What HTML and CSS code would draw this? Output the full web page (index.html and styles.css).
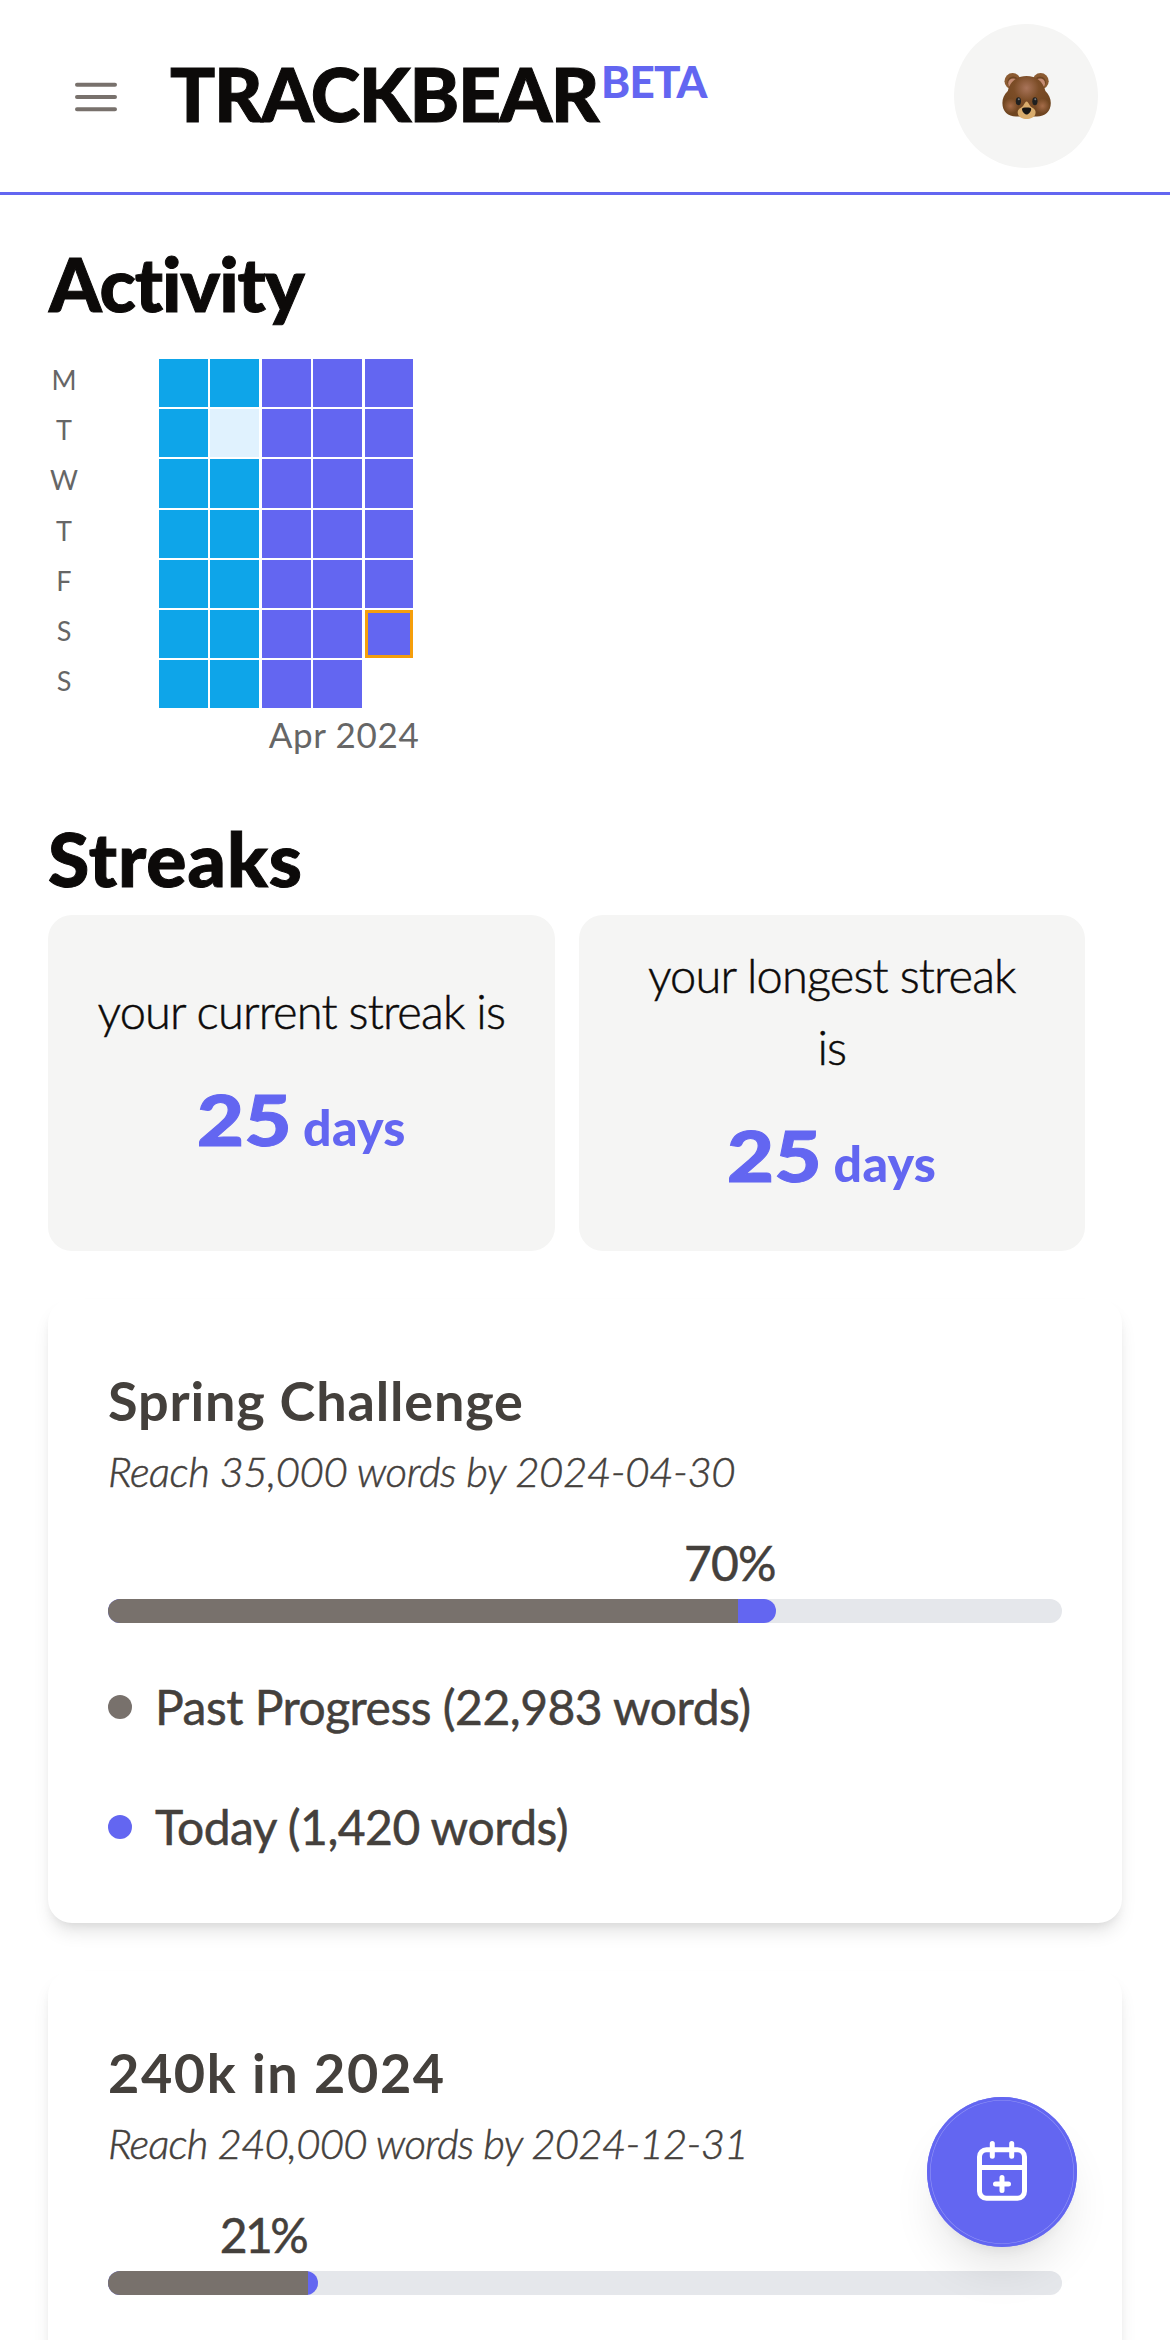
FILE: index.html
```html
<!DOCTYPE html>
<html lang="en">
<head>
<meta charset="utf-8">
<title>TrackBear</title>
<link rel="stylesheet" href="styles.css">
</head>
<body>
<header class="topbar">
  <button class="menu-button" aria-label="Menu">
    <svg width="42" height="30" viewBox="0 0 42 30" fill="none" stroke="#78716c" stroke-width="4" stroke-linecap="round"><path d="M2 2.8H40M2 15H40M2 27.2H40"/></svg>
  </button>
  <div class="brand"><span class="brand-name">TRACKBEAR</span><span class="brand-beta">BETA</span></div>
  <div class="avatar">
    <svg width="74" height="74" viewBox="0 0 74 74">
      <defs>
        <radialGradient id="fur" gradientUnits="userSpaceOnUse" cx="36.5" cy="28" r="28">
          <stop offset="0" stop-color="#a9745a"/><stop offset=".45" stop-color="#7c4d27"/><stop offset="1" stop-color="#6f4520"/>
        </radialGradient>
        <radialGradient id="cheek"><stop offset="0" stop-color="#a56c49"/><stop offset="1" stop-color="#a56c49" stop-opacity="0"/></radialGradient>
      </defs>
      <circle cx="22.6" cy="21.2" r="8.1" fill="#8b5b32"/><circle cx="50.6" cy="21.2" r="8.1" fill="#8b5b32"/>
      <circle cx="23.2" cy="22.2" r="5.8" fill="#704522"/><circle cx="50" cy="22.2" r="5.8" fill="#704522"/>
      <circle cx="23.2" cy="23.4" r="5" fill="#c58c73"/><circle cx="50" cy="23.4" r="5" fill="#c58c73"/>
      <path d="M36.5 16C46 16 53 21 55.4 31C59 34.5 60.8 38.5 60.8 43C60.8 51.5 55 56.4 47 56.4H26C18 56.4 12.4 51.5 12.4 43C12.4 38.5 14 34.5 17.8 31C20 21 27 16 36.5 16Z" fill="url(#fur)"/>
      <circle cx="20.5" cy="46" r="7.5" fill="url(#cheek)"/><circle cx="52.5" cy="46" r="7.5" fill="url(#cheek)"/>
      <path d="M36.6 41.5C38.8 42 39 46 42 47.4C45 48.8 46.2 51 45.4 54C44.5 57.5 40.5 59 36.6 59C32.7 59 28.8 57.5 27.9 54C27.1 51 28.3 48.8 31.3 47.4C34.2 46 34.4 42 36.6 41.5Z" fill="#d9ac6c"/>
      <ellipse cx="28.4" cy="41.2" rx="2.6" ry="4" fill="#20201f"/><ellipse cx="44.9" cy="41.2" rx="2.6" ry="4" fill="#20201f"/>
      <circle cx="28.8" cy="39.2" r="1" fill="#78797c"/><circle cx="45.3" cy="39.2" r="1" fill="#78797c"/>
      <path d="M32 49.3C32 47.7 34 47.6 36.6 47.6C39.2 47.6 41.2 47.7 41.2 49.3C41.2 51.5 38.4 54.6 36.6 54.6C34.8 54.6 32 51.5 32 49.3Z" fill="#161514"/>
    </svg>
  </div>
</header>

<main class="page">
  <h2 class="heading heading-activity">Activity</h2>
  <section class="activity">
    <div class="weekdays"><span>M</span><span>T</span><span>W</span><span>T</span><span>F</span><span>S</span><span>S</span></div>
    <div class="calendar">
      <div class="cells">
        <i></i><i></i><i></i><i></i><i></i><i></i><i></i>
        <i></i><i class="low"></i><i></i><i></i><i></i><i></i><i></i>
        <i class="high"></i><i class="high"></i><i class="high"></i><i class="high"></i><i class="high"></i><i class="high"></i><i class="high"></i>
        <i class="high"></i><i class="high"></i><i class="high"></i><i class="high"></i><i class="high"></i><i class="high"></i><i class="high"></i>
        <i class="high"></i><i class="high"></i><i class="high"></i><i class="high"></i><i class="high"></i><i class="high today"></i>
      </div>
      <div class="month">Apr 2024</div>
    </div>
  </section>

  <h2 class="heading heading-streaks">Streaks</h2>
  <section class="streaks">
    <div class="streak">
      <p class="streak-label">your current streak is</p>
      <p class="streak-value"><span class="count">25</span><span class="unit">days</span></p>
    </div>
    <div class="streak">
      <p class="streak-label">your longest streak<br>is</p>
      <p class="streak-value"><span class="count">25</span><span class="unit">days</span></p>
    </div>
  </section>

  <article class="card">
    <h3 class="card-title">Spring Challenge</h3>
    <p class="card-goal">Reach 35,000 words by 2024-04-30</p>
    <div class="percent" style="width: 70%">70%</div>
    <div class="meter"><div class="meter-fill" style="width: 70%"><div class="meter-past" style="width: 94.3%"></div></div></div>
    <ul class="legend">
      <li><span class="dot"></span>Past Progress (22,983 words)</li>
      <li class="legend-today"><span class="dot"></span>Today (1,420 words)</li>
    </ul>
  </article>

  <article class="card">
    <h3 class="card-title card-title-year">240k in 2024</h3>
    <p class="card-goal card-goal-year">Reach 240,000 words by 2024-12-31</p>
    <div class="percent percent-year" style="width: 21%">21%</div>
    <div class="meter"><div class="meter-fill" style="width: 22%"><div class="meter-past" style="width: 95.5%"></div></div></div>
  </article>
</main>

<button class="fab" aria-label="Add progress">
  <svg width="50" height="60" viewBox="0 0 50 60" fill="none" stroke="#fff" stroke-width="5" stroke-linecap="round">
    <rect x="2.5" y="8.7" width="45" height="48.6" rx="7"/>
    <path d="M2.5 26.5H47.5M15.3 2.5V15.3M34.7 2.5V15.3M25 36.5V49.5M18.5 43H31.5"/>
  </svg>
</button>
</body>
</html>
```
FILE: styles.css
```css
* { box-sizing: border-box; }

body {
  display: flex;
  flex-direction: column;
  height: 100vh;
  margin: 0;
  overflow: hidden;
  background: #fff;
  color: #0c0a09;
  font-family: Lato, "Liberation Sans", sans-serif;
}

h2, h3, p, ul { margin: 0; padding: 0; }

button { border: 0; padding: 0; background: none; }

/* Top bar */
.topbar {
  display: flex;
  flex: none;
  align-items: center;
  height: 195px;
  padding: 0 72px 0 75px;
  border-bottom: 3px solid #6366f1;
}

.menu-button { display: flex; width: 42px; padding-top: 1px; }

.brand {
  display: flex;
  align-items: flex-start;
  margin-left: 53px;
  padding-bottom: 6px;
  font-weight: 900;
}

.brand-name {
  font-size: 75px;
  line-height: 84px;
  letter-spacing: -1.4px;
  -webkit-text-stroke: 1px;
}

.brand-beta {
  padding-top: 4px;
  margin-left: 3px;
  font-size: 44px;
  line-height: 52px;
  letter-spacing: -.8px;
  color: #6366f1;
}

.avatar {
  display: flex;
  align-items: center;
  justify-content: center;
  width: 144px;
  height: 144px;
  margin-left: auto;
  padding: 2px 0 0 1px;
  border-radius: 50%;
  background: #f5f5f4;
}

.page { flex: 1; min-height: 0; padding: 43px 48px 0; overflow: hidden; }

.heading {
  font-size: 75px;
  font-weight: 900;
  line-height: 90px;
  -webkit-text-stroke: 1px;
}
.heading-activity { margin: 0 0 31px 1px; letter-spacing: -1.1px; }
.heading-streaks { margin: 57px 0 12px; letter-spacing: 1px; }

/* Activity calendar */
.activity { display: flex; height: 397px; }

.weekdays {
  display: grid;
  grid-template-rows: repeat(7, 50.2px);
  width: 32px;
  margin-right: 79px;
  font-size: 27px;
  line-height: 41px;
  text-align: center;
  color: #666;
}

.cells {
  display: grid;
  grid-auto-flow: column;
  grid-template-rows: repeat(7, 48.2px);
  grid-auto-columns: 48.8px;
  gap: 2px 2.6px;
}

.cells i { background: #0ea5e9; }
.cells .low { background: #e0f2fe; }
.cells .high { background: #6366f1; }
.cells .today { border: 3px solid #f59e0b; }

.month {
  margin: 5px -6px 0 0;
  font-size: 35px;
  line-height: 42px;
  letter-spacing: .65px;
  text-align: right;
  color: #666;
}

/* Streaks */
.streaks { display: flex; gap: 24px; padding-right: 37px; }

.streak {
  display: flex;
  flex: 1;
  flex-direction: column;
  align-items: center;
  justify-content: center;
  gap: 18px;
  height: 336px;
  padding: 28px 0 38px;
  border-radius: 24px;
  background: #f5f5f4;
}

.streak-label {
  font-size: 47px;
  font-weight: 300;
  line-height: 72px;
  letter-spacing: -.86px;
  text-align: center;
  -webkit-text-stroke: .5px;
}

.streak-value {
  display: flex;
  align-items: baseline;
  font-weight: 900;
  line-height: 108px;
  color: #6366f1;
}

.count { margin: 0 18px 0 6px; font-size: 71px; transform: scaleX(1.15); -webkit-text-stroke: 1px; }
.unit { font-size: 50px; letter-spacing: .3px; }

/* Goal cards */
.card {
  height: 624px;
  margin-top: 48px;
  padding: 66px 60px 60px;
  border-radius: 24px;
  background: #fff;
  color: #44403c;
  box-shadow: 0 12px 18px -3px rgba(0, 0, 0, .1), 0 6px 12px -6px rgba(0, 0, 0, .1);
}

.card-title { font-size: 54px; font-weight: 700; line-height: 72px; letter-spacing: .84px; }
.card-title-year { letter-spacing: 1.6px; }

.card-goal {
  margin-top: 4px;
  font-size: 42px;
  font-style: italic;
  font-weight: 300;
  line-height: 60px;
  letter-spacing: -.48px;
  -webkit-text-stroke: .5px;
}
.card-goal-year { letter-spacing: -.82px; }

.percent {
  margin-top: 32px;
  font-size: 48px;
  line-height: 60px;
  letter-spacing: -.8px;
  text-align: right;
  -webkit-text-stroke: .5px;
}
.percent-year { padding-right: 2px; letter-spacing: -2.5px; }

.meter { height: 24px; margin-top: 6px; border-radius: 12px; background: #e5e7eb; }
.meter-fill { height: 100%; overflow: hidden; border-radius: 12px; background: #6366f1; }
.meter-past { height: 100%; background: #78716c; }

.legend { display: grid; gap: 48px; margin-top: 48px; list-style: none; }

.legend li {
  display: flex;
  align-items: center;
  gap: 23px;
  font-size: 48px;
  line-height: 72px;
  letter-spacing: -.5px;
  -webkit-text-stroke: .5px;
}

.dot { width: 24px; height: 24px; border-radius: 50%; background: #78716c; }
.legend-today .dot { background: #6366f1; }

/* Floating action button */
.fab {
  position: fixed;
  right: 93px;
  bottom: 93px;
  display: flex;
  align-items: center;
  justify-content: center;
  width: 150px;
  height: 150px;
  border-radius: 50%;
  background: #6366f1;
  box-shadow: inset 0 0 0 3px #6366f1, inset 0 0 0 3.6px rgba(255, 255, 255, .3), 0 30px 45px -9px rgba(0, 0, 0, .1), 0 12px 18px -12px rgba(0, 0, 0, .1);
}
.fab svg { margin-bottom: 2px; }
```
